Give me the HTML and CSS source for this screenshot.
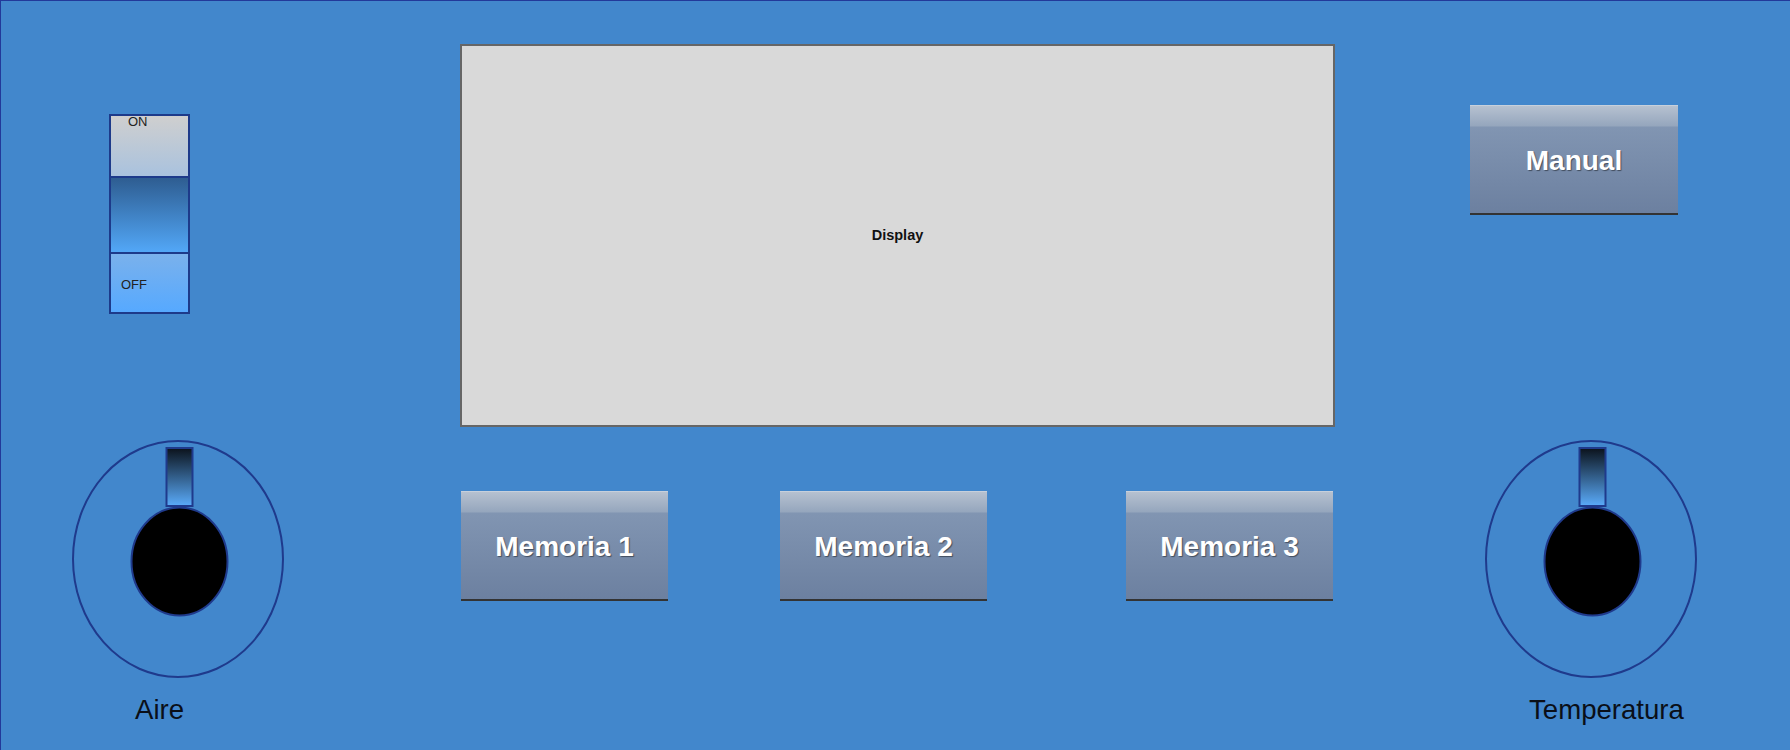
FILE: index.html
```html
<!DOCTYPE html>
<html lang="es">
<head>
<meta charset="utf-8">
<title>Panel</title>
<link rel="stylesheet" href="styles.css">
</head>
<body>
<div class="panel">
  <div class="col col-left">
    <div class="switch">
      <div class="sw-on"><span>ON</span></div>
      <div class="sw-mid"></div>
      <div class="sw-off"><span>OFF</span></div>
    </div>
    <svg class="knob knob-left" width="213" height="240" viewBox="0 0 213 240">
      <defs>
        <linearGradient id="ptrL" x1="0" y1="0" x2="0" y2="1">
          <stop offset="0" stop-color="#0b121b"/>
          <stop offset="1" stop-color="#5aabfa"/>
        </linearGradient>
      </defs>
      <ellipse cx="106" cy="119" rx="105" ry="118" fill="none" stroke="#1f3a8c" stroke-width="2"/>
      <rect x="94.5" y="8" width="26" height="58" fill="url(#ptrL)" stroke="#1f3a8c" stroke-width="2"/>
      <ellipse cx="107.5" cy="121.5" rx="48" ry="54" fill="#000" stroke="#1f3a8c" stroke-width="2"/>
    </svg>
    <div class="label label-aire">Aire</div>
  </div>

  <div class="col col-center">
    <div class="display"><span>Display</span></div>
    <div class="mem-row">
      <div class="btn mem1">Memoria 1</div>
      <div class="btn mem2">Memoria 2</div>
      <div class="btn mem3">Memoria 3</div>
    </div>
  </div>

  <div class="col col-right">
    <div class="btn manual">Manual</div>
    <svg class="knob knob-right" width="213" height="240" viewBox="0 0 213 240">
      <defs>
        <linearGradient id="ptrR" x1="0" y1="0" x2="0" y2="1">
          <stop offset="0" stop-color="#0b121b"/>
          <stop offset="1" stop-color="#5aabfa"/>
        </linearGradient>
      </defs>
      <ellipse cx="106" cy="119" rx="105" ry="118" fill="none" stroke="#1f3a8c" stroke-width="2"/>
      <rect x="94.5" y="8" width="26" height="58" fill="url(#ptrR)" stroke="#1f3a8c" stroke-width="2"/>
      <ellipse cx="107.5" cy="121.5" rx="48" ry="54" fill="#000" stroke="#1f3a8c" stroke-width="2"/>
    </svg>
    <div class="label label-temp">Temperatura</div>
  </div>
</div>
</body>
</html>
```

FILE: styles.css
```css
html, body {
  margin: 0;
  padding: 0;
  overflow: hidden;
  background: #4287cc;
  font-family: "Liberation Sans", Arial, sans-serif;
}

.panel {
  display: flex;
  width: 1790px;
  height: 750px;
  overflow: hidden;
  box-sizing: border-box;
  border-top: 1px solid #22399a;
  border-left: 1px solid #22399a;
  background: #4287cc;
}

.col {
  display: flex;
  flex-direction: column;
  align-items: flex-start;
  flex: none;
}

.col-left { width: 459px; }
.col-center { width: 875px; }
.col-right { width: 455px; }

/* switch */
.switch {
  margin-top: 113px;
  margin-left: 108px;
  width: 81px;
  height: 200px;
  box-sizing: border-box;
  border: 2px solid #1d3a8a;
  display: flex;
  flex-direction: column;
  color: #222;
  font-size: 13px;
}
.sw-on {
  height: 60px;
  background: linear-gradient(to bottom, #cfcfcf, #a9c2de);
  padding-left: 17px;
  line-height: 12px;
}
.sw-mid {
  height: 74px;
  border-top: 2px solid #1d3a8a;
  background: linear-gradient(to bottom, #2e5d91, #52a7f7);
}
.sw-off {
  height: 58px;
  border-top: 2px solid #1d3a8a;
  background: linear-gradient(to bottom, #7ab1ec, #56a9ff);
  padding-left: 10px;
  line-height: 13px;
}
.sw-off span {
  display: block;
  margin-top: 24px;
}

/* knobs */
.knob { display: block; flex: none; }
.knob-left { margin-top: 126px; margin-left: 71px; }
.knob-right { margin-top: 225px; margin-left: 150px; }

.label {
  font-size: 27.6px;
  line-height: 31px;
  color: #0a0f18;
  margin-top: 14px;
}
.label-aire { margin-left: 134px; }
.label-temp { margin-left: 194px; }

/* display */
.display {
  margin-top: 43px;
  width: 875px;
  height: 383px;
  box-sizing: border-box;
  border: 2px solid #666;
  padding-bottom: 2px;
  background: #d9d9d9;
  display: flex;
  align-items: center;
  justify-content: center;
  font-size: 14.5px;
  font-weight: bold;
  color: #111;
}

.mem-row {
  display: flex;
  margin-top: 64px;
}

/* buttons */
.btn {
  width: 207px;
  height: 110px;
  box-sizing: border-box;
  padding-top: 3px;
  border-bottom: 2px solid #333;
  background: linear-gradient(to bottom, #d8dfe8 0, #b6c1d0 1px, #95a6bd 21px, #8195b2 22px, #6c80a0 100%);
  color: #fff;
  font-size: 28px;
  font-weight: bold;
  display: flex;
  align-items: center;
  justify-content: center;
  text-shadow: 1px 1px 1px rgba(0, 0, 0, 0.45);
}
.mem1 { margin-left: 1px; }
.mem2 { margin-left: 112px; }
.mem3 { margin-left: 139px; }

.manual {
  margin-top: 104px;
  margin-left: 135px;
  width: 208px;
}
```
